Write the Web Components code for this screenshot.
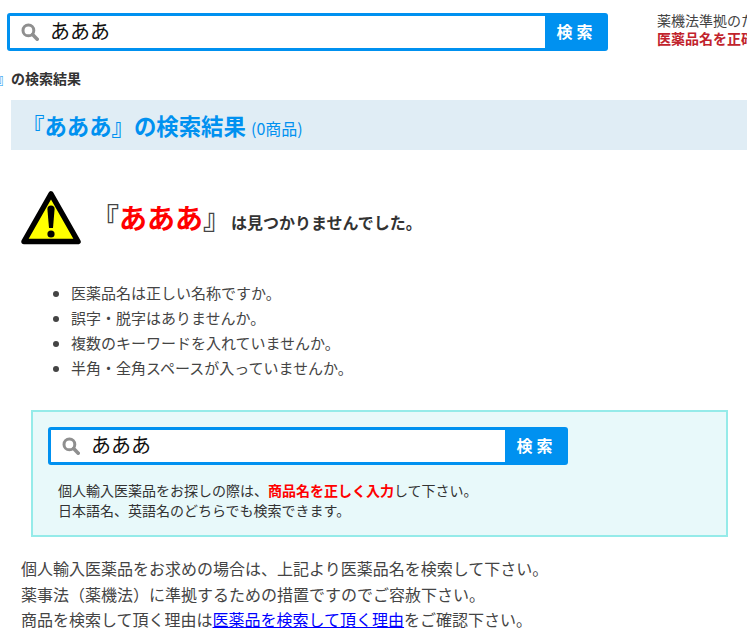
<!DOCTYPE html>
<html lang="ja">
<head>
<meta charset="utf-8">
<title>検索結果</title>
<style>
  html, body { margin: 0; padding: 0; background: #fff; overflow: hidden; }
  body { width: 747px; height: 640px; font-family: "Noto Sans CJK JP", "Noto Sans", sans-serif; color: #333; }
</style>
</head>
<body>
<result-page></result-page>

<script>
class SearchBox extends HTMLElement {
  constructor() {
    super();
    this.attachShadow({ mode: 'open' });
    this.shadowRoot.innerHTML = `
      <style>
        :host { display: flex; height: 38px; box-sizing: border-box; background: #0091f0; border-radius: 3px; padding: 3px 0 3px 3px; }
        .field { flex: 1; display: flex; align-items: center; background: #fff; padding-left: 11px; font-size: 20px; line-height: 30px; color: #111; }
        .field span { margin-top: -2px; }
        svg { width: 18px; height: 18px; margin-right: 11px; flex: none; }
        .btn { width: 63px; flex: none; display: flex; align-items: center; justify-content: center; color: #fff; font-size: 16px; font-weight: 700; letter-spacing: 4px; margin-top: -3px; box-sizing: border-box; }
      </style>
      <div class="field">
        <svg viewBox="0 0 18 18"><circle cx="7.4" cy="7.4" r="5.4" fill="none" stroke="#8f8f8f" stroke-width="3"/><path d="M11.6 11.6 L16.2 16.2" stroke="#8f8f8f" stroke-width="3.6" stroke-linecap="round"/></svg>
        <span><slot></slot></span>
      </div>
      <div class="btn">検索</div>`;
  }
}

class WarningIcon extends HTMLElement {
  constructor() {
    super();
    this.attachShadow({ mode: 'open' });
    this.shadowRoot.innerHTML = `
      <style>:host { display: block; width: 62px; height: 56px; } svg { display: block; }</style>
      <svg width="62" height="56" viewBox="0 0 62 56">
        <path d="M31 4 L58 51.5 L4 51.5 Z" fill="#ffff00" stroke="#000" stroke-width="5.5" stroke-linejoin="round"/>
        <path d="M27.4 19 a3.6 3.6 0 0 1 7.2 0 L33 38 h-4 Z" fill="#000"/>
        <circle cx="31" cy="44" r="3.6" fill="#000"/>
      </svg>`;
  }
}

class NoticeBox extends HTMLElement {
  constructor() {
    super();
    this.attachShadow({ mode: 'open' });
    this.shadowRoot.innerHTML = `
      <style>
        :host { display: block; box-sizing: border-box; width: 697px; height: 127px; margin-left: 31px; background: #e8f9fa; border: 2px solid #95ebe9; padding: 15px 15px 0; }
        search-box { width: 520px; }
        p { margin: 15px 0 0 10px; font-size: 14px; line-height: 20px; color: #333; }
        b { color: #f00; }
      </style>
      <search-box>あああ</search-box>
      <p>個人輸入医薬品をお探しの際は、<b>商品名を正しく入力</b>して下さい。<br>日本語名、英語名のどちらでも検索できます。</p>`;
  }
}

class ResultPage extends HTMLElement {
  constructor() {
    super();
    this.attachShadow({ mode: 'open' });
    this.shadowRoot.innerHTML = `
      <style>
        :host { display: block; width: 747px; height: 640px; overflow: hidden; }
        .top { display: flex; align-items: flex-start; padding: 13px 0 0 7px; height: 38px; }
        .top search-box { width: 601px; flex: none; }
        .law { margin: -2px 0 0 49px; white-space: nowrap; font-size: 14px; line-height: 18px; color: #444; }
        .law b { display: block; color: #c1232c; }
        .crumb { margin: 17px 0 0 -3px; font-size: 14px; line-height: 20px; font-weight: 700; white-space: nowrap; }
        .crumb i { font-style: normal; color: #0091f0; font-weight: 400; }
        h1 { margin: 12px 0 0 11px; height: 50px; background: #e0edf5; padding-left: 11px; font-size: 22.4px; line-height: 50px; color: #0091f0; font-weight: 700; white-space: nowrap; box-sizing: border-box; }
        h1 small { font-size: 16px; font-weight: 400; }
        .none { display: flex; align-items: center; margin: 39px 0 -1px 20px; }
        .none warning-icon { margin-top: 1px; }
        .none h2 { margin: -2px 0 0 9px; font-size: 16px; font-weight: 700; white-space: nowrap; }
        .none span { font-size: 28px; font-weight: 700; color: #444; }
        .none em { font-style: normal; font-weight: 700; font-size: 28px; color: #f00; }
        ul { margin: 35px 0 0; padding: 0 0 0 71px; font-size: 15px; line-height: 25px; color: #444; }
        notice-box { margin-top: 30px; }
        .foot { margin: 19px 0 0 21px; font-size: 16px; line-height: 25.5px; color: #444; white-space: nowrap; }
        a { color: #00f; }
      </style>
      <div class="top">
        <search-box>あああ</search-box>
        <div class="law">薬機法準拠のため<b>医薬品名を正確に</b></div>
      </div>
      <div class="crumb"><i>』</i>の検索結果</div>
      <h1>『あああ』の検索結果 <small>(0商品)</small></h1>
      <div class="none">
        <warning-icon></warning-icon>
        <h2><span>『</span><em>あああ</em><span>』</span>は見つかりませんでした。</h2>
      </div>
      <ul>
        <li>医薬品名は正しい名称ですか。</li>
        <li>誤字・脱字はありませんか。</li>
        <li>複数のキーワードを入れていませんか。</li>
        <li>半角・全角スペースが入っていませんか。</li>
      </ul>
      <notice-box></notice-box>
      <div class="foot">個人輸入医薬品をお求めの場合は、上記より医薬品名を検索して下さい。<br>薬事法（薬機法）に準拠するための措置ですのでご容赦下さい。<br>商品を検索して頂く理由は<a href="#">医薬品を検索して頂く理由</a>をご確認下さい。</div>`;
  }
}

customElements.define('search-box', SearchBox);
customElements.define('warning-icon', WarningIcon);
customElements.define('notice-box', NoticeBox);
customElements.define('result-page', ResultPage);
</script>
</body>
</html>
